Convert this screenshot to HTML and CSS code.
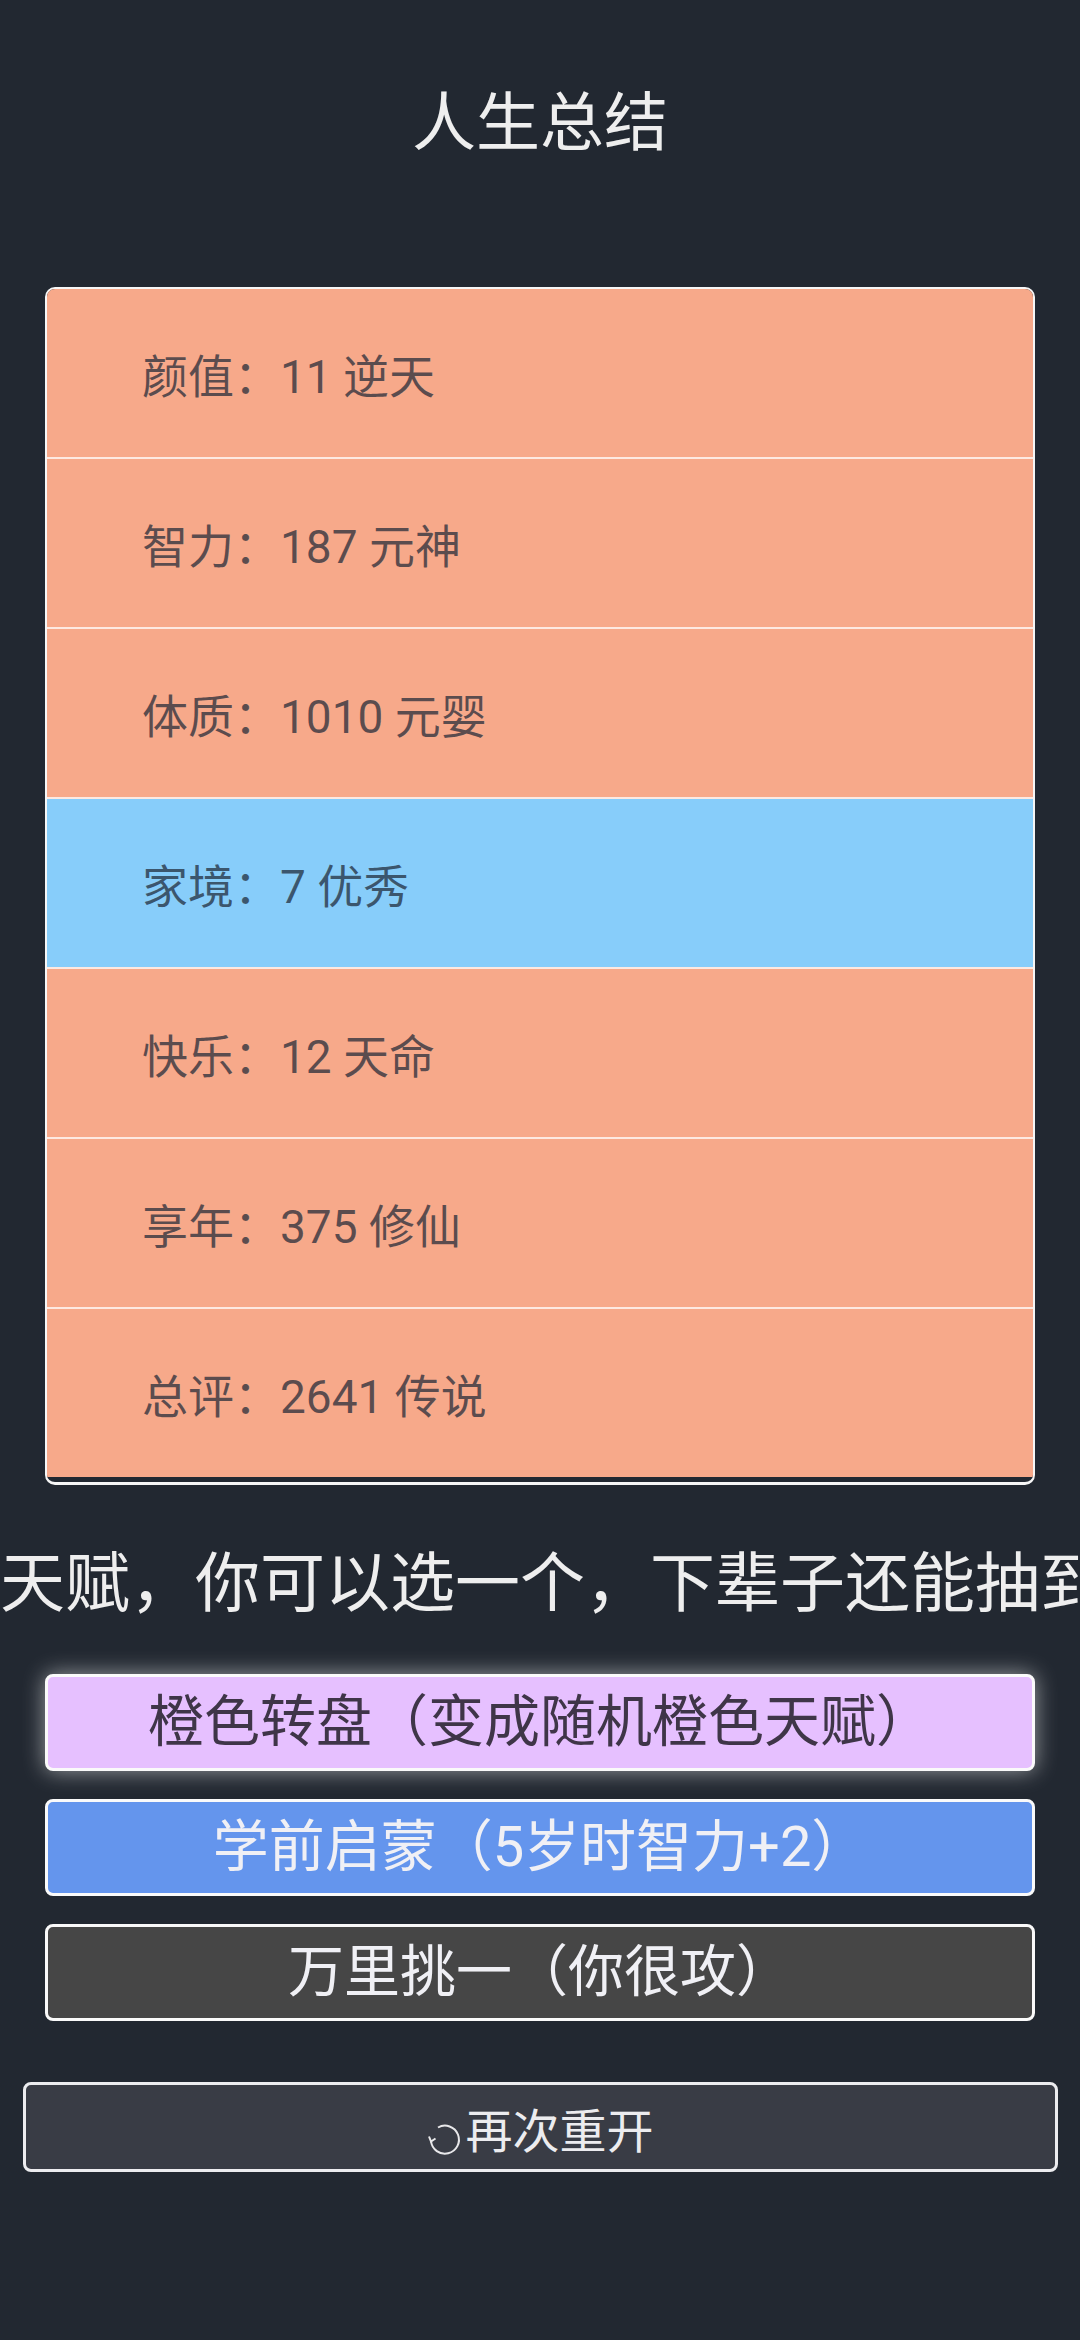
FILE: index.html
```html
<!DOCTYPE html>
<html lang="zh-CN">
<head>
    <meta charset="UTF-8">
    <meta name="viewport" content="width=device-width, initial-scale=1.0">
    <title>人生总结</title>
    <link rel="stylesheet" href="styles.css">
</head>
<body>
    <h1 class="head">人生总结</h1>

    <!-- 属性总结 -->
    <ul class="judge">
        <li class="grade-orange">颜值：11 逆天</li>
        <li class="grade-orange">智力：187 元神</li>
        <li class="grade-orange">体质：1010 元婴</li>
        <li class="grade-blue">家境：7 优秀</li>
        <li class="grade-orange">快乐：12 天命</li>
        <li class="grade-orange">享年：375 修仙</li>
        <li class="grade-orange">总评：2641 传说</li>
    </ul>

    <div class="tip">天赋，你可以选一个，下辈子还能抽到</div>

    <!-- 天赋继承 -->
    <ul class="talents">
        <li class="talent selected grade-purple">橙色转盘（变成随机橙色天赋）</li>
        <li class="talent grade-cornflower">学前启蒙（5岁时智力+2）</li>
        <li class="talent grade-dark">万里挑一（你很攻）</li>
    </ul>

    <button class="again" onclick="location.reload()">
        <svg class="again-icon" viewBox="0 0 34 34" width="34" height="34">
            <path d="M10 4.5 A14 14 0 1 1 3 18" fill="none" stroke="#e8e8ea" stroke-width="2"/>
            <path d="M1 13.5 L3 18.5 L7.5 15.5" fill="none" stroke="#e8e8ea" stroke-width="2"/>
        </svg>再次重开
    </button>
</body>
</html>
```

FILE: styles.css
```css
html {
    overflow-x: hidden;
}
body {
    margin: 0;
    min-height: 2340px;
    background-color: #222831;
    color: #eeeeee;
    font-family: Roboto, "Noto Sans CJK SC", sans-serif;
    text-align: center;
}
ul {
    list-style: none;
    margin: 0;
    padding: 0;
}
.head {
    margin: 0;
    padding-top: 76px;
    font-size: 64px;
    font-weight: normal;
    line-height: 96px;
}
.judge {
    margin: 115px 45px 0;
    padding-bottom: 5px;
    border: 2px solid #f6f6f6;
    border-bottom-width: 3px;
    border-radius: 10px;
    overflow: hidden;
    text-align: left;
}
.judge li {
    display: flex;
    align-items: center;
    height: 168px;
    padding-left: 95px;
    font-size: 46px;
    color: rgba(30, 40, 55, 0.72);
}
.judge li + li {
    border-top: 2px solid #fde9e1;
}
.grade-orange {
    background-color: #f7a98a;
}
.grade-blue {
    background-color: #87cdfa;
}
.tip {
    margin-top: 51px;
    font-size: 65px;
    line-height: 96px;
    white-space: nowrap;
}
.talents {
    margin: 42px 45px 0;
    display: flex;
    flex-direction: column;
    gap: 28px;
}
.talent {
    height: 91px;
    line-height: 91px;
    border: 3px solid #fafafa;
    border-radius: 8px;
    font-size: 56px;
    color: #f0f0f5;
}
.talent.selected {
    box-shadow: 0 0 22px rgba(255, 255, 255, 0.55);
}
.grade-purple {
    background-color: #e6c0ff;
    color: #3f3548;
}
.grade-cornflower {
    background-color: #6495ed;
}
.grade-dark {
    background-color: #464646;
}
.again {
    display: block;
    width: 1035px;
    height: 90px;
    margin: 61px 0 0 23px;
    padding: 0;
    border: 3px solid #ececef;
    border-radius: 8px;
    background-color: #393c45;
    color: #ececef;
    font-family: Roboto, "Noto Sans CJK SC", sans-serif;
    font-size: 47px;
    cursor: pointer;
}
.again-icon {
    vertical-align: -9px;
    margin-right: 4px;
}
```
